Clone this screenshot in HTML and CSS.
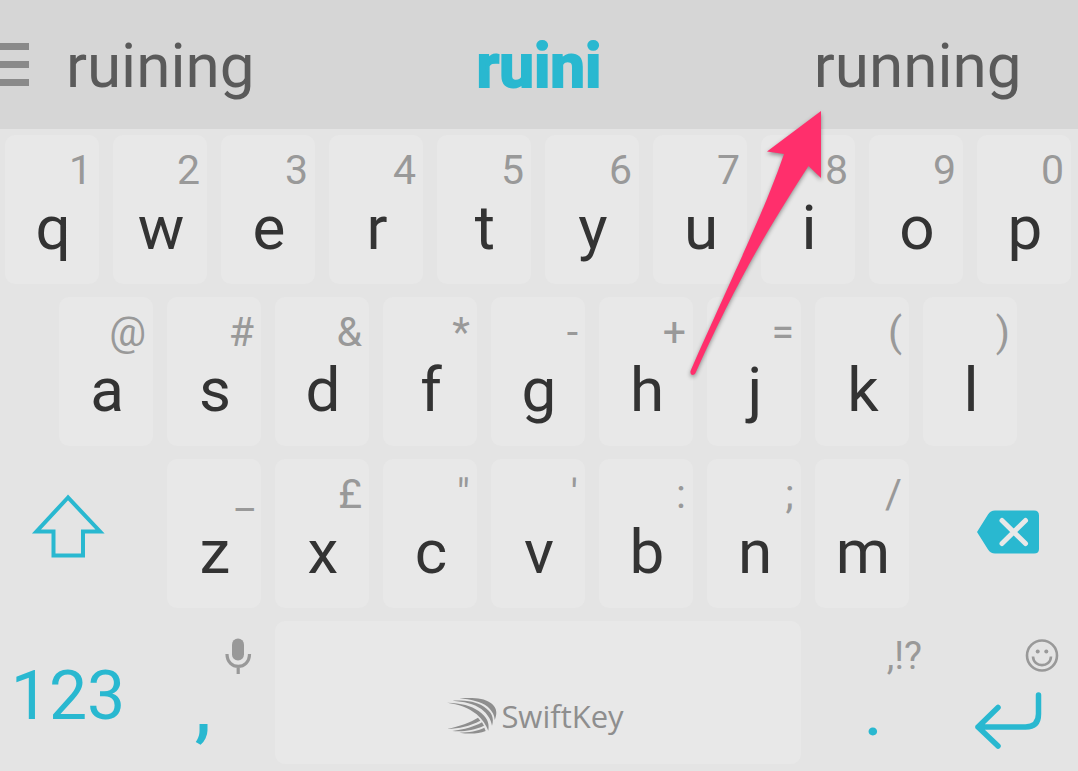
FILE: index.html
```html
<!DOCTYPE html>
<html lang="en">
<head>
<meta charset="utf-8">
<meta name="viewport" content="width=device-width, initial-scale=1">
<title>SwiftKey keyboard</title>
<link rel="stylesheet" href="styles.css">
</head>
<body>
<header class="suggestions">
  <button class="menu" type="button" aria-label="Menu"><span class="menu-bar"></span><span class="menu-bar"></span><span class="menu-bar"></span></button>
  <button class="suggestion" type="button">ruining</button>
  <button class="suggestion suggestion--current" type="button">ruini</button>
  <button class="suggestion" type="button">running</button>
</header>
<main class="keyboard">
  <button class="key" type="button"><span class="hint">1</span><span class="letter">q</span></button>
  <button class="key" type="button"><span class="hint">2</span><span class="letter">w</span></button>
  <button class="key" type="button"><span class="hint">3</span><span class="letter">e</span></button>
  <button class="key" type="button"><span class="hint">4</span><span class="letter">r</span></button>
  <button class="key" type="button"><span class="hint">5</span><span class="letter">t</span></button>
  <button class="key" type="button"><span class="hint">6</span><span class="letter">y</span></button>
  <button class="key" type="button"><span class="hint">7</span><span class="letter">u</span></button>
  <button class="key" type="button"><span class="hint">8</span><span class="letter">i</span></button>
  <button class="key" type="button"><span class="hint">9</span><span class="letter">o</span></button>
  <button class="key" type="button"><span class="hint">0</span><span class="letter">p</span></button>

  <button class="key key--home-first" type="button"><span class="hint">@</span><span class="letter">a</span></button>
  <button class="key" type="button"><span class="hint">#</span><span class="letter">s</span></button>
  <button class="key" type="button"><span class="hint">&amp;</span><span class="letter">d</span></button>
  <button class="key" type="button"><span class="hint">*</span><span class="letter">f</span></button>
  <button class="key" type="button"><span class="hint">-</span><span class="letter">g</span></button>
  <button class="key" type="button"><span class="hint">+</span><span class="letter">h</span></button>
  <button class="key" type="button"><span class="hint">=</span><span class="letter">j</span></button>
  <button class="key" type="button"><span class="hint">(</span><span class="letter">k</span></button>
  <button class="key" type="button"><span class="hint">)</span><span class="letter">l</span></button>

  <button class="key key--plain key--left key--centered key--row-start" type="button" aria-label="Shift">
    <svg class="icon" width="74" height="78" viewBox="31 494 74 78" fill="none" stroke="#29b8d0" stroke-width="4"><path d="M68 497.500 36.500 531.500H53.500V555.500H83V531.500H100Z"/></svg>
  </button>
  <button class="key key--bottom-first" type="button"><span class="hint">_</span><span class="letter">z</span></button>
  <button class="key" type="button"><span class="hint">£</span><span class="letter">x</span></button>
  <button class="key" type="button"><span class="hint">"</span><span class="letter">c</span></button>
  <button class="key" type="button"><span class="hint">'</span><span class="letter">v</span></button>
  <button class="key" type="button"><span class="hint">:</span><span class="letter">b</span></button>
  <button class="key" type="button"><span class="hint">;</span><span class="letter">n</span></button>
  <button class="key" type="button"><span class="hint">/</span><span class="letter">m</span></button>
  <button class="key key--plain key--right key--centered key--row-end" type="button" aria-label="Delete">
    <svg class="icon" width="64" height="46" viewBox="976 510 64 46"><path fill="#29b8d0" d="M977 532 988 514.500Q990.500 510.500 995 510.500H1034Q1039 510.500 1039 515.500V549Q1039 553.500 1034 553.500H995Q990.500 553.500 988 549.500Z"/><path d="M1002 520.500 1025.500 543.500M1025.500 520.500 1002 543.500" stroke="#e8e8e8" stroke-width="5" stroke-linecap="round"/></svg>
  </button>

  <button class="key key--plain key--left key--centered key--row-start" type="button"><span class="mode">123</span></button>
  <button class="key key--plain key--left" type="button">
    <span class="hint"><svg class="icon" width="30" height="38" viewBox="224 638 30 38"><rect x="232" y="639.500" width="12" height="22" rx="6" fill="#999"/><path d="M227 655C227 671.500 249.500 671.500 249.500 655M238.200 667V675" fill="none" stroke="#999" stroke-width="3.200"/></svg></span>
    <span class="letter letter--accent letter--comma">,</span>
  </button>
  <button class="key key--space" type="button" aria-label="Space, SwiftKey">
    <svg class="icon" width="50" height="38" viewBox="25 35 150 114" fill="#8e8e8e"><path d="M62 39C105 37 134 38 155 52C176 66 176 84 168 104C168 91 162 78 147 64C126 48 96 43 62 39Z"/><path d="M42 46C85 45 112 49 136 64C158 79 168 96 160 121C157 103 147 86 128 71C105 54 76 49 42 46Z"/><path d="M25 52C68 53 97 61 120 77C145 95 153 112 149 136C142 119 132 103 114 87C88 65 60 57 25 52Z"/><path d="M25 131C64 122 94 112 118 97L125 106C92 123 63 129 25 131Z"/><path d="M41 137C79 132 105 125 130 111L136 121C103 136 76 139 41 137Z"/><path d="M62 142C93 141 115 137 137 127L141 137C117 146 91 146 62 142Z"/></svg>
    <span class="brand">SwiftKey</span>
  </button>
  <button class="key key--plain key--right" type="button"><span class="hint hint--group">,!?</span><span class="letter letter--accent">.</span></button>
  <button class="key key--plain key--right" type="button" aria-label="Enter">
    <span class="hint"><svg class="icon" width="34" height="36" viewBox="1026 637 34 36"><g fill="none" stroke="#999" stroke-width="2.600"><circle cx="1043" cy="654.500" r="15"/><path d="M1034 655.500C1034.500 667 1051.500 667 1052 655.500"/></g><circle cx="1038.700" cy="650.500" r="2" fill="#999"/><circle cx="1047.300" cy="650.500" r="2" fill="#999"/></svg></span>
    <svg class="icon icon--enter" width="68" height="66" viewBox="974 683 68 66" fill="none" stroke="#29b8d0" stroke-width="5.500" stroke-linecap="round" stroke-linejoin="round"><path d="M1038.500 695V714Q1038.500 727 1025.500 727H978M998 707.500 978 727 998 746"/></svg>
  </button>
</main>
<svg class="pointer" width="150" height="290" viewBox="680 100 150 290" aria-hidden="true"><path fill="#ff2f6c" d="M821 111 767 151.500 784 154C764 212 736 268 690.500 371Q690 375 693 375Q695 375 696 372C740 275 768 229 808.500 166L821 178Z"/></svg>
</body>
</html>
```
FILE: styles.css
```css
* {
  box-sizing: border-box;
}

body {
  position: relative;
  display: flex;
  flex-direction: column;
  min-height: 100vh;
  margin: 0;
  background: #e4e4e4;
  font-family: Roboto, "Liberation Sans", sans-serif;
}

button {
  margin: 0;
  padding: 0;
  border: 0;
  background: none;
  font: inherit;
  color: inherit;
}

.suggestions {
  display: grid;
  grid-template-columns: 30px 260fr 496fr 260fr;
  align-items: center;
  min-height: 129px;
  padding-right: 30px;
  background: #d6d6d6;
}

.menu {
  display: flex;
  flex-direction: column;
  gap: 11px;
  width: 29px;
}

.menu-bar {
  height: 7px;
  background: #8a8a8a;
}

.suggestion {
  padding-top: 3px;
  font-size: 62px;
  line-height: 72px;
  color: #5a5a5a;
}

.suggestion--current {
  font-weight: 700;
  color: #29b8d0;
  -webkit-text-stroke: 2px #29b8d0;
}

.keyboard {
  flex: 1;
  display: grid;
  grid-template-columns: repeat(40, minmax(0, 1fr));
  grid-template-rows: repeat(3, minmax(149px, 149fr)) minmax(143px, 143fr);
  gap: 13px 14px;
  padding: 6px 7px 7px 5px;
}

.key {
  grid-column-end: span 4;
  display: flex;
  flex-direction: column;
  align-items: stretch;
  justify-content: flex-start;
  padding: 8px 0 0 2px;
  border-radius: 10px;
  background: #e8e8e8;
  color: #333;
}

.key--home-first {
  grid-column: 3 / span 4;
}

.key--bottom-first {
  grid-column: 7 / span 4;
}

.key--plain {
  grid-column-end: span 5;
  background: none;
}

.key--row-start {
  grid-column: 1 / span 5;
}

.key--row-end {
  grid-column: 36 / span 5;
}

.key--left {
  padding: 8px 0 0 5px;
}

.key--right {
  padding: 8px 5px 0 0;
}

.key--centered {
  align-items: center;
  justify-content: center;
  padding-top: 0;
  padding-bottom: 2px;
}

.key--space {
  grid-column-end: span 20;
  flex-direction: row;
  align-items: center;
  justify-content: center;
  gap: 4px;
  padding: 46px 5px 0 0;
}

.hint {
  display: flex;
  align-items: center;
  justify-content: flex-end;
  height: 54px;
  padding-right: 7px;
  font-size: 41px;
  line-height: 54px;
  color: #999;
}

.hint--group {
  padding-right: 9px;
  font-size: 38px;
}

.letter {
  font-size: 62px;
  line-height: 62px;
  text-align: center;
}

.letter--accent {
  font-weight: 500;
  color: #29b8d0;
}

.letter--comma {
  font-size: 76px;
  line-height: 48px;
}

.mode {
  padding-top: 9px;
  font-size: 68px;
  line-height: 72px;
  color: #29b8d0;
}

.brand {
  font-family: "Open Sans", "Noto Sans", sans-serif;
  font-size: 31px;
  font-weight: 400;
  line-height: 38px;
  color: #8e8e8e;
}

.icon {
  display: block;
  flex: none;
}

.icon--enter {
  align-self: center;
}

.pointer {
  position: absolute;
  top: 100px;
  left: 680px;
  filter: drop-shadow(0 2px 2px rgba(0, 0, 0, 0.4));
  pointer-events: none;
}
```
